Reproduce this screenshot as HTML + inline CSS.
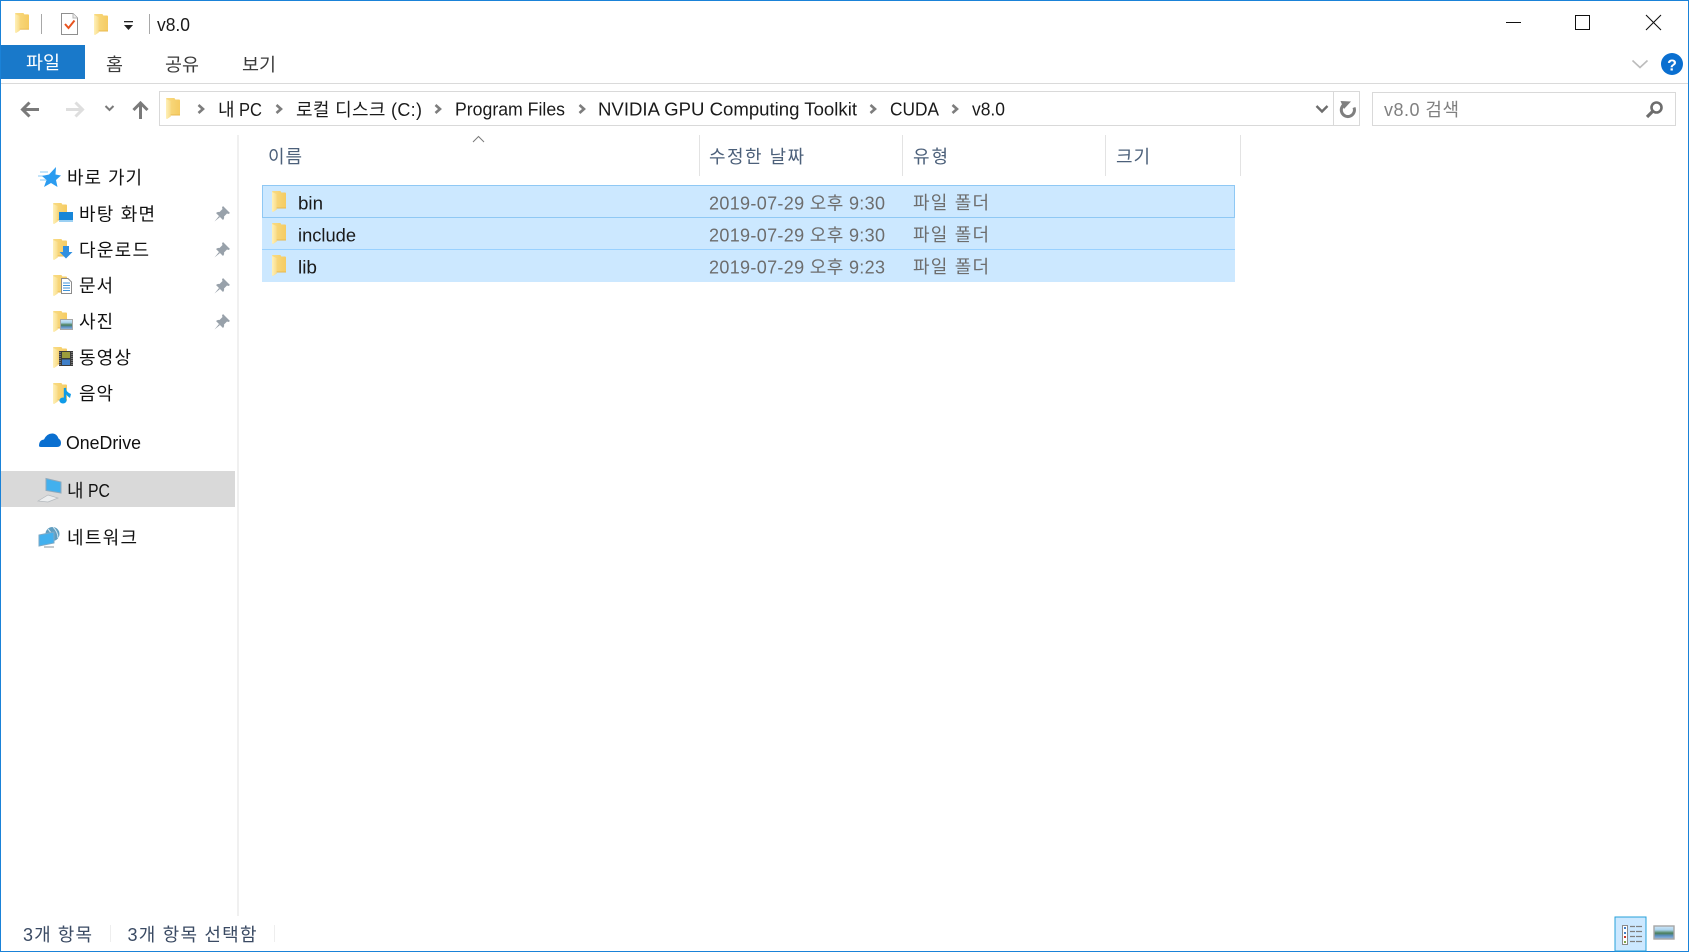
<!DOCTYPE html>
<html lang="ko">
<head>
<meta charset="utf-8">
<title>v8.0</title>
<style>
html,body{margin:0;padding:0;background:#fff;width:1689px;height:952px;overflow:hidden}
svg{display:block;position:absolute;left:0;top:0}
text{font-family:"Liberation Sans","Noto Sans CJK KR",sans-serif;font-size:18px;fill:#1a1a1a}
.h{fill:#4c607a}
.g{fill:#6d6d6d}
.n{fill:#111}
.s{fill:#3a4a63}
</style>
</head>
<body>
<svg width="1689" height="952" viewBox="0 0 1689 952" xmlns="http://www.w3.org/2000/svg">
<defs>
<linearGradient id="fg" x1="0" y1="0" x2="1" y2="0"><stop offset="0" stop-color="#f9dc85"/><stop offset="1" stop-color="#f5cb62"/></linearGradient>
<linearGradient id="fl" x1="0" y1="0" x2="1" y2="0"><stop offset="0" stop-color="#fff0b8"/><stop offset="1" stop-color="#f8dc8a"/></linearGradient>
<linearGradient id="sky" x1="0" y1="0" x2="0" y2="1"><stop offset="0" stop-color="#d2e8f7"/><stop offset=".3" stop-color="#a9d3ee"/><stop offset=".55" stop-color="#4c7f58"/><stop offset=".75" stop-color="#5a8fc4"/><stop offset="1" stop-color="#9dbcdb"/></linearGradient>
<symbol id="folder" viewBox="0 0 15 21" preserveAspectRatio="none" overflow="visible">
<path d="M0 1 Q0 0 1 0 H9 L10 1.5 H14 Q15 1.5 15 2.5 V17 H5 V18.5 L1 21 L0 20Z" fill="url(#fg)"/>
<path d="M0 1 L5 3 V18.5 L1 21 L0 20Z" fill="url(#fl)"/>
<path d="M5 16.5 H15 V17.5 H5Z" fill="#e8b94f"/>
</symbol>
<symbol id="chev" viewBox="0 0 8 10" overflow="visible">
<path d="M1.5 1 L6 5 L1.5 9" fill="none" stroke="#7d7d7d" stroke-width="2.6"/>
</symbol>
<symbol id="pin" viewBox="0 0 16 16" overflow="visible">
<path d="M9 0 L16 7 L14.5 8 L13 7.5 L10 10.5 Q10.5 12.5 9 14 L2 7 Q4 5.5 5.5 6 L8.5 3 L8 1.5Z" fill="#98a1aa"/>
<path d="M5 10 L0.5 15.5 L6 11Z" fill="#98a1aa"/>
</symbol>
</defs>

<!-- window border -->
<rect x="0" y="0" width="1689" height="952" fill="#fff"/>
<rect x="0" y="0" width="1689" height="1" fill="#1a82d8"/>
<rect x="0" y="0" width="1" height="952" fill="#1a82d8"/>
<rect x="1688" y="0" width="1" height="952" fill="#1a82d8"/>
<rect x="0" y="951" width="1689" height="1" fill="#1a82d8"/>

<!-- title bar -->
<use href="#folder" x="15" y="13" width="14" height="20"/>
<rect x="41" y="14" width="1" height="20" fill="#a8a8a8"/>
<path d="M61.5 13.5 H73 L77.5 18 V34.5 H61.5Z" fill="#fff" stroke="#8f8f8f"/>
<path d="M73 13.5 V18 H77.5" fill="#eee" stroke="#b5b5b5"/>
<path d="M65 24 L68.5 28 L74.5 20.5" fill="none" stroke="#e8531f" stroke-width="2"/>
<use href="#folder" x="94" y="14" width="14" height="21"/>
<rect x="124" y="21" width="9" height="1.3" fill="#222"/>
<path d="M124 25 H133 L128.5 30Z" fill="#222"/>
<rect x="149" y="14" width="1" height="20" fill="#a8a8a8"/>
<text x="157" y="31" textLength="33" lengthAdjust="spacingAndGlyphs">v8.0</text>

<!-- window controls -->
<rect x="1506" y="22" width="15" height="1" fill="#111"/>
<rect x="1575.5" y="15.5" width="14" height="14" fill="none" stroke="#111"/>
<path d="M1646 15 L1661 30 M1661 15 L1646 30" stroke="#111" stroke-width="1.1" fill="none"/>

<!-- ribbon tabs -->
<rect x="1" y="45" width="84" height="34" fill="#1979ca"/>
<text x="26" y="69" textLength="34" lengthAdjust="spacingAndGlyphs" style="fill:#fff">파일</text>
<text x="106" y="71" textLength="17" lengthAdjust="spacingAndGlyphs" style="fill:#3b3b3b">홈</text>
<text x="165" y="71" textLength="34" lengthAdjust="spacingAndGlyphs" style="fill:#3b3b3b">공유</text>
<text x="242" y="71" textLength="34" lengthAdjust="spacingAndGlyphs" style="fill:#3b3b3b">보기</text>
<rect x="1" y="83" width="1687" height="1" fill="#dadada"/>
<path d="M1632.5 60.5 L1640 67.5 L1647.5 60.5" fill="none" stroke="#bcbcbc" stroke-width="1.6"/>
<circle cx="1672" cy="64" r="11" fill="#0a6fd0"/>
<text x="1672" y="70.5" text-anchor="middle" style="font-size:16px;font-weight:bold;fill:#fff">?</text>

<!-- nav -->
<path d="M39 109.5 H23 M29.5 102.5 L22.5 109.5 L29.5 116.5" fill="none" stroke="#7a7a7a" stroke-width="3"/>
<path d="M66 109.5 H82 M75.5 102.5 L82.5 109.5 L75.5 116.5" fill="none" stroke="#dedede" stroke-width="3"/>
<path d="M105.5 106 L109.5 110 L113.5 106" fill="none" stroke="#7a7a7a" stroke-width="2"/>
<path d="M140.5 119 V103 M133.5 110 L140.5 103 L147.5 110" fill="none" stroke="#7a7a7a" stroke-width="3"/>

<!-- address bar -->
<rect x="159.5" y="91.5" width="1200" height="34" fill="#fff" stroke="#d9d9d9"/>
<rect x="1333" y="92" width="1" height="33" fill="#d9d9d9"/>
<use href="#folder" x="166" y="98" width="14" height="21"/>
<use href="#chev" x="197" y="104" width="8" height="10"/>
<text x="218" y="116">내</text>
<text x="239" y="116" textLength="23" lengthAdjust="spacingAndGlyphs">PC</text>
<use href="#chev" x="275" y="104" width="8" height="10"/>
<text x="296" y="116" textLength="126" lengthAdjust="spacing">로컬 디스크 (C:)</text>
<use href="#chev" x="434" y="104" width="8" height="10"/>
<text x="455" y="115.5" textLength="110" lengthAdjust="spacingAndGlyphs">Program Files</text>
<use href="#chev" x="578" y="104" width="8" height="10"/>
<text x="598" y="115.5" textLength="259" lengthAdjust="spacingAndGlyphs">NVIDIA GPU Computing Toolkit</text>
<use href="#chev" x="869" y="104" width="8" height="10"/>
<text x="890" y="115.5" textLength="49" lengthAdjust="spacingAndGlyphs">CUDA</text>
<use href="#chev" x="951" y="104" width="8" height="10"/>
<text x="972" y="115.5" textLength="33" lengthAdjust="spacingAndGlyphs">v8.0</text>
<path d="M1316.5 106 L1322 111.5 L1327.5 106" fill="none" stroke="#6d6d6d" stroke-width="2.4"/>
<path d="M1345 104 A6.6 6.6 0 1 0 1354 107.5" fill="none" stroke="#7f7f7f" stroke-width="3"/>
<path d="M1340.5 101 L1351 101.5 L1344 109Z" fill="#7f7f7f"/>

<!-- search -->
<rect x="1372.5" y="92.5" width="303" height="33" fill="#fff" stroke="#d9d9d9"/>
<text x="1384" y="116" textLength="75" lengthAdjust="spacing" style="fill:#808080">v8.0 검색</text>
<circle cx="1656.5" cy="107.5" r="5" fill="none" stroke="#6d6d6d" stroke-width="2.6"/>
<path d="M1652.5 111.5 L1647 117" stroke="#6d6d6d" stroke-width="3.2" fill="none"/>

<!-- sidebar -->
<rect x="237" y="135" width="2" height="781" fill="#f0f0f0"/>

<!-- quick access star -->
<path d="M40 172 H48 M38 176 H46 M40 180 H46" stroke="#9fd4f6" stroke-width="1.2"/>
<path d="M56 167 L55.5 174.5 L61 175.5 L56 180 L57.5 187 L51 183 L44 187 L46.5 180 L42 176 L49 174.5Z" fill="#2b9cf0"/>
<text x="67" y="184" textLength="75" lengthAdjust="spacing" class="n">바로 가기</text>

<!-- desktop -->
<use href="#folder" x="53" y="203" width="14" height="21"/>
<rect x="59" y="212" width="14" height="10" fill="#1786d8"/><rect x="59" y="220" width="14" height="2" fill="#9bd0f3"/>
<text x="79" y="220.5" textLength="76" lengthAdjust="spacing" class="n">바탕 화면</text>
<use href="#pin" x="214" y="206" width="16" height="16"/>

<!-- downloads -->
<use href="#folder" x="53" y="239" width="14" height="21"/>
<path d="M63 246 H69 V252 H72.5 L66 258.5 L59.5 252 H63Z" fill="#2f8fe0"/>
<text x="79" y="256.5" textLength="70" lengthAdjust="spacing" class="n">다운로드</text>
<use href="#pin" x="214" y="242" width="16" height="16"/>

<!-- documents -->
<use href="#folder" x="53" y="275" width="14" height="21"/>
<path d="M61.5 278.5 H68 L71.5 282 V293.5 H61.5Z" fill="#fff" stroke="#8c8c8c"/>
<path d="M63 283 H70 M63 285.5 H70 M63 288 H70 M63 290.5 H70" stroke="#3f93d8" stroke-width="1"/>
<text x="79" y="292" textLength="34" lengthAdjust="spacing" class="n">문서</text>
<use href="#pin" x="214" y="278" width="16" height="16"/>

<!-- pictures -->
<use href="#folder" x="53" y="311" width="14" height="21"/>
<rect x="60.5" y="319.5" width="12" height="10" fill="url(#sky)" stroke="#a6a6a6"/>
<text x="79" y="328" textLength="34" lengthAdjust="spacing" class="n">사진</text>
<use href="#pin" x="214" y="314" width="16" height="16"/>

<!-- videos -->
<use href="#folder" x="53" y="347" width="14" height="21"/>
<rect x="59" y="351" width="14" height="15" fill="#3a3a3a"/>
<path d="M60 352 V365 M72 352 V365" stroke="#aaa" stroke-width="1" stroke-dasharray="1 1"/>
<rect x="62" y="352" width="8" height="6" fill="#9c9c3c"/><rect x="62" y="359.5" width="8" height="5.5" fill="#3f7fc8"/>
<text x="79" y="364" textLength="52" lengthAdjust="spacing" class="n">동영상</text>

<!-- music -->
<use href="#folder" x="53" y="383" width="14" height="21"/>
<path d="M65 388 V400" stroke="#0f9be8" stroke-width="2.4"/>
<ellipse cx="63" cy="400.5" rx="3.6" ry="3" fill="#0f9be8"/>
<path d="M65 387 Q66 392 71 394 L70 398 Q67 396 65 393Z" fill="#0f9be8"/>
<text x="79" y="400" textLength="34" lengthAdjust="spacing" class="n">음악</text>

<!-- onedrive -->
<path d="M39 446 Q39 440 44 439.5 Q47 433 53 433.5 Q57 434 58.5 438.5 Q61 440 61 443 Q61 447 57 447 H42 Q39 447 39 446Z" fill="#0a6fd0"/>
<text x="66" y="449" textLength="75" lengthAdjust="spacingAndGlyphs" class="n">OneDrive</text>

<!-- this pc -->
<rect x="1" y="471" width="234" height="36" fill="#d9d9d9"/>
<path d="M46 478.5 L61 482 V493 L46 490.5Z" fill="#42b0ee" stroke="#8fa9bc"/>
<path d="M38 501 L48 495 L58 498 L48 502Z" fill="#eceeef" stroke="#b4b9bd" stroke-width=".7"/>
<text x="67" y="497">내</text>
<text x="88" y="497" textLength="22" lengthAdjust="spacingAndGlyphs" class="n">PC</text>

<!-- network -->
<circle cx="52.5" cy="534" r="7" fill="#5f9dc0"/>
<path d="M48 529 Q53 534 51 540 M53 527 Q58 532 58 538" stroke="#d2e7f2" fill="none"/>
<path d="M39 535 L54 532 V543 L39 546Z" fill="#42b0ee" stroke="#7da9c6"/>
<path d="M44 547 H54" stroke="#b0b8be" stroke-width="1.5"/>
<text x="67" y="544" textLength="70" lengthAdjust="spacing" class="n">네트워크</text>

<!-- list header -->
<path d="M473 142 L478.5 136.5 L484 142" fill="none" stroke="#7a7a7a" stroke-width="1"/>
<text x="268" y="163" textLength="34" lengthAdjust="spacing" class="h">이름</text>
<rect x="699" y="135" width="1" height="41" fill="#e3e3e3"/>
<text x="709" y="163" textLength="95" lengthAdjust="spacing" class="h">수정한 날짜</text>
<rect x="902" y="135" width="1" height="41" fill="#e3e3e3"/>
<text x="913" y="163" textLength="35" lengthAdjust="spacing" class="h">유형</text>
<rect x="1105" y="135" width="1" height="41" fill="#e3e3e3"/>
<text x="1116" y="163" textLength="34" lengthAdjust="spacing" class="h">크기</text>
<rect x="1240" y="135" width="1" height="41" fill="#e3e3e3"/>

<!-- selected rows -->
<rect x="262" y="185" width="973" height="97" fill="#cce8ff"/>
<rect x="262.5" y="185.5" width="972" height="32" fill="none" stroke="#8fc8f4"/>
<rect x="262" y="249" width="973" height="1" fill="#99d1ff"/>

<use href="#folder" x="272" y="191" width="14" height="21"/>
<text x="298" y="209.5" textLength="25" lengthAdjust="spacingAndGlyphs">bin</text>
<text x="709" y="209.5" textLength="176" lengthAdjust="spacing" class="g">2019-07-29 오후 9:30</text>
<text x="913" y="209" textLength="76" lengthAdjust="spacing" class="g">파일 폴더</text>

<use href="#folder" x="272" y="223" width="14" height="21"/>
<text x="298" y="241.5" textLength="58" lengthAdjust="spacingAndGlyphs">include</text>
<text x="709" y="241.5" textLength="176" lengthAdjust="spacing" class="g">2019-07-29 오후 9:30</text>
<text x="913" y="241" textLength="76" lengthAdjust="spacing" class="g">파일 폴더</text>

<use href="#folder" x="272" y="255" width="14" height="21"/>
<text x="298" y="273.5" textLength="19" lengthAdjust="spacingAndGlyphs">lib</text>
<text x="709" y="273.5" textLength="176" lengthAdjust="spacing" class="g">2019-07-29 오후 9:23</text>
<text x="913" y="273" textLength="76" lengthAdjust="spacing" class="g">파일 폴더</text>

<!-- status bar -->
<text x="23" y="941" textLength="69" lengthAdjust="spacing" class="s">3개 항목</text>
<rect x="110" y="925" width="1" height="17" fill="#eeeeee"/>
<text x="127.5" y="941" textLength="129" lengthAdjust="spacing" class="s">3개 항목 선택함</text>
<rect x="274" y="925" width="1" height="17" fill="#eeeeee"/>

<!-- view buttons -->
<rect x="1615" y="917" width="31" height="34" fill="#cce8ff" stroke="#26a0da"/>
<rect x="1622.5" y="925.5" width="5" height="19" fill="#fff" stroke="#8a8a8a"/>
<rect x="1624" y="927" width="2" height="2" fill="#3f7fc8"/>
<rect x="1624" y="932" width="2" height="2" fill="#3f7fc8"/>
<rect x="1624" y="936" width="2" height="2" fill="#c8352a"/>
<rect x="1624" y="941" width="2" height="2" fill="#7fa84a"/>
<path d="M1630 926.5 H1635 M1636 926.5 H1642 M1630 931.5 H1635 M1636 931.5 H1642 M1630 936.5 H1635 M1636 936.5 H1642 M1630 941.5 H1635 M1636 941.5 H1642" stroke="#7f7f7f" stroke-width="1.2"/>
<rect x="1654" y="926" width="20" height="13" fill="url(#sky)" stroke="#a6a6a6" stroke-width="1.4"/>
</svg>
</body>
</html>
